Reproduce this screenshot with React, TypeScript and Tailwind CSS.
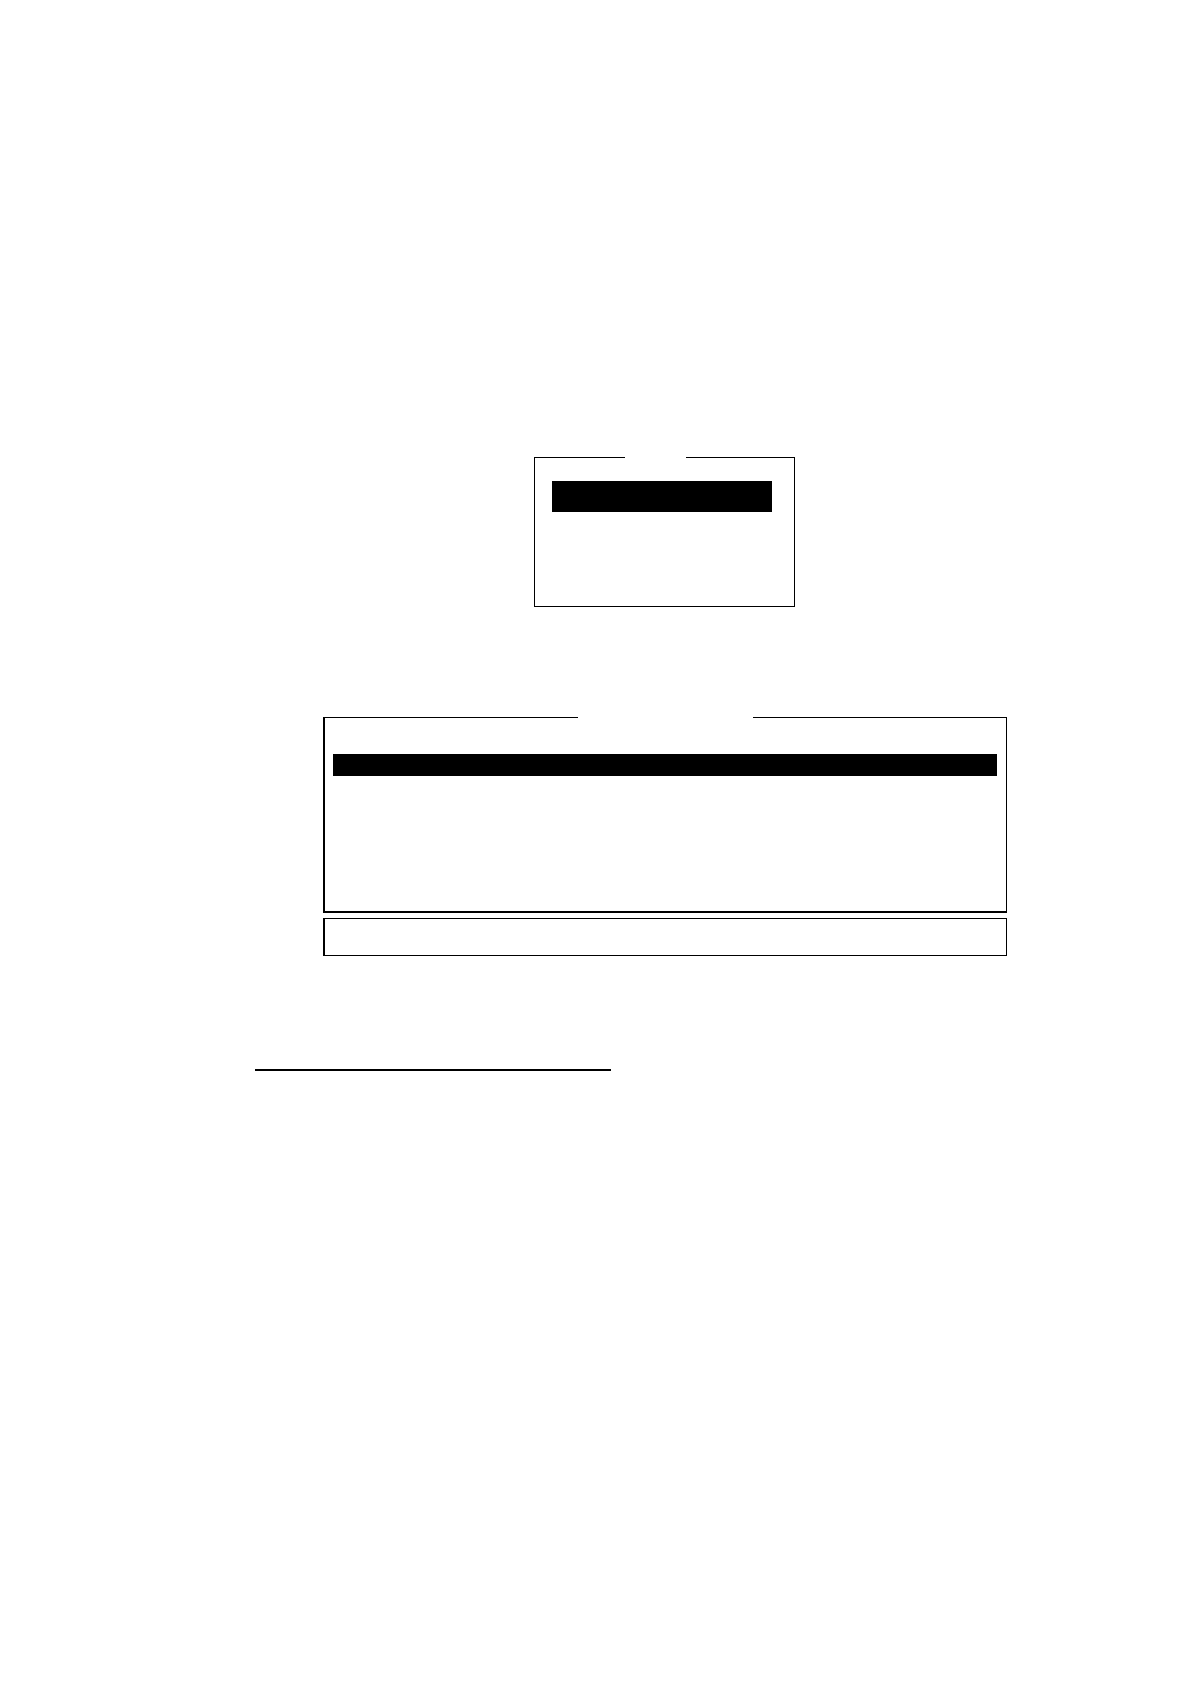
import React from "react";

function MenuFrame() {
  return (
    <section aria-label="Menu" className="mx-auto w-full max-w-[261px]">
      <div className="flex h-px justify-between">
        <span className="w-[91px] bg-black" />
        <span className="w-[109px] bg-black" />
      </div>
      <div className="h-[149px] border-x border-b border-black pt-[23px] pr-[22px] pl-[17px]">
        <div className="h-[31px] bg-black" />
      </div>
    </section>
  );
}

function ListFrame() {
  return (
    <section aria-label="List" className="ml-[68px] w-full max-w-[684px]">
      <div className="flex h-px justify-between">
        <span className="w-[255px] bg-black" />
        <span className="w-[254px] bg-black" />
      </div>
      <div className="h-[195px] border-r border-b-2 border-l-2 border-black px-2 pt-9 pr-[9px]">
        <div className="h-[22px] bg-black" />
      </div>
      <div className="mt-[5px] h-[38px] border border-l-2 border-black" />
    </section>
  );
}

export default function App() {
  return (
    <main className="min-h-screen bg-white pt-[457px] pr-[116px] pl-[255px]">
      <MenuFrame />
      <div className="mt-[110px]">
        <ListFrame />
      </div>
      <hr className="mt-[113px] w-full max-w-[356px] border-t-2 border-black" />
    </main>
  );
}
